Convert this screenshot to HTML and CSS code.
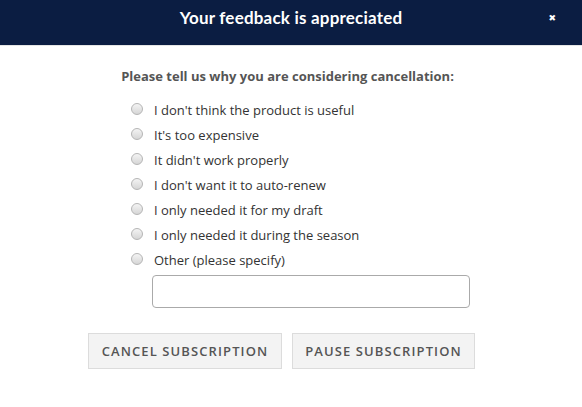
FILE: index.html
```html
<!DOCTYPE html>
<html>
<head>
<meta charset="utf-8">
<link rel="stylesheet" href="styles.css">
</head>
<body>
<header class="modal-header">
  <h1 class="modal-title">Your feedback is appreciated</h1>
  <span class="close">&#x2716;</span>
</header>
<main class="modal-body">
  <h2 class="question">Please tell us why you are considering cancellation:</h2>
  <ul class="reasons">
    <li><label><input type="radio" name="r"><span>I don't think the product is useful</span></label></li>
    <li><label><input type="radio" name="r"><span>It's too expensive</span></label></li>
    <li><label><input type="radio" name="r"><span>It didn't work properly</span></label></li>
    <li><label><input type="radio" name="r"><span>I don't want it to auto-renew</span></label></li>
    <li><label><input type="radio" name="r"><span>I only needed it for my draft</span></label></li>
    <li><label><input type="radio" name="r"><span>I only needed it during the season</span></label></li>
    <li><label><input type="radio" name="r"><span>Other (please specify)</span></label></li>
  </ul>
  <input class="other" type="text">
  <div class="actions">
    <button class="btn btn-cancel">Cancel Subscription</button>
    <button class="btn btn-pause">Pause Subscription</button>
  </div>
</main>
</body>
</html>
```
FILE: styles.css
```css
html, body {
  margin: 0;
  padding: 0;
  background: #fff;
}
body {
  font-family: "Open Sans", "Liberation Sans", sans-serif;
  color: #333;
}
.modal-header {
  height: 45px;
  background: #0b1d42;
  border-bottom: 1px solid #e5e5e5;
  display: flex;
  align-items: center;
  justify-content: center;
  position: relative;
}
.modal-title {
  margin: 0;
  font-family: "Lato", "Liberation Sans", sans-serif;
  font-weight: 700;
  font-size: 17px;
  letter-spacing: 0.2px;
  color: #fff;
  padding-bottom: 10px;
}
.close {
  position: absolute;
  right: 26px;
  top: 13px;
  color: #fff;
  font-size: 9px;
  font-family: "DejaVu Sans", sans-serif;
}
.modal-body {
  padding-top: 21px;
}
.question {
  margin: 0 0 12px 0;
  text-align: center;
  font-size: 13px;
  font-weight: 700;
  color: #555;
  padding-right: 7px;
}
.reasons {
  list-style: none;
  margin: 0 0 0 131px;
  padding: 0;
}
.reasons li {
  height: 25px;
  display: flex;
  align-items: center;
}
.reasons label {
  display: flex;
  align-items: center;
  font-size: 13px;
  color: #333;
}
.reasons input {
  appearance: none;
  -webkit-appearance: none;
  width: 12px;
  height: 12px;
  margin: 0 11px 0 0;
  border-radius: 50%;
  border: 1px solid #b5b5b5;
  background: linear-gradient(#f4f4f4, #d6d6d6);
  box-sizing: border-box;
  position: relative;
  top: -1px;
}
.other {
  display: block;
  margin: 3px 0 0 152px;
  width: 318px;
  height: 33px;
  box-sizing: border-box;
  border: 1px solid #aaa;
  border-radius: 4px;
}
.actions {
  display: flex;
  gap: 10px;
  margin: 25px 0 0 88px;
}
.btn {
  height: 36px;
  box-sizing: border-box;
  background: #f3f3f3;
  border: 1px solid #dcdcdc;
  font-family: "Open Sans", "Liberation Sans", sans-serif;
  font-weight: 600;
  font-size: 13px;
  letter-spacing: 1.1px;
  text-transform: uppercase;
  white-space: nowrap;
  color: #555;
  padding: 0;
  text-align: center;
}
.btn-cancel { width: 194px; }
.btn-pause { width: 183px; }
```
